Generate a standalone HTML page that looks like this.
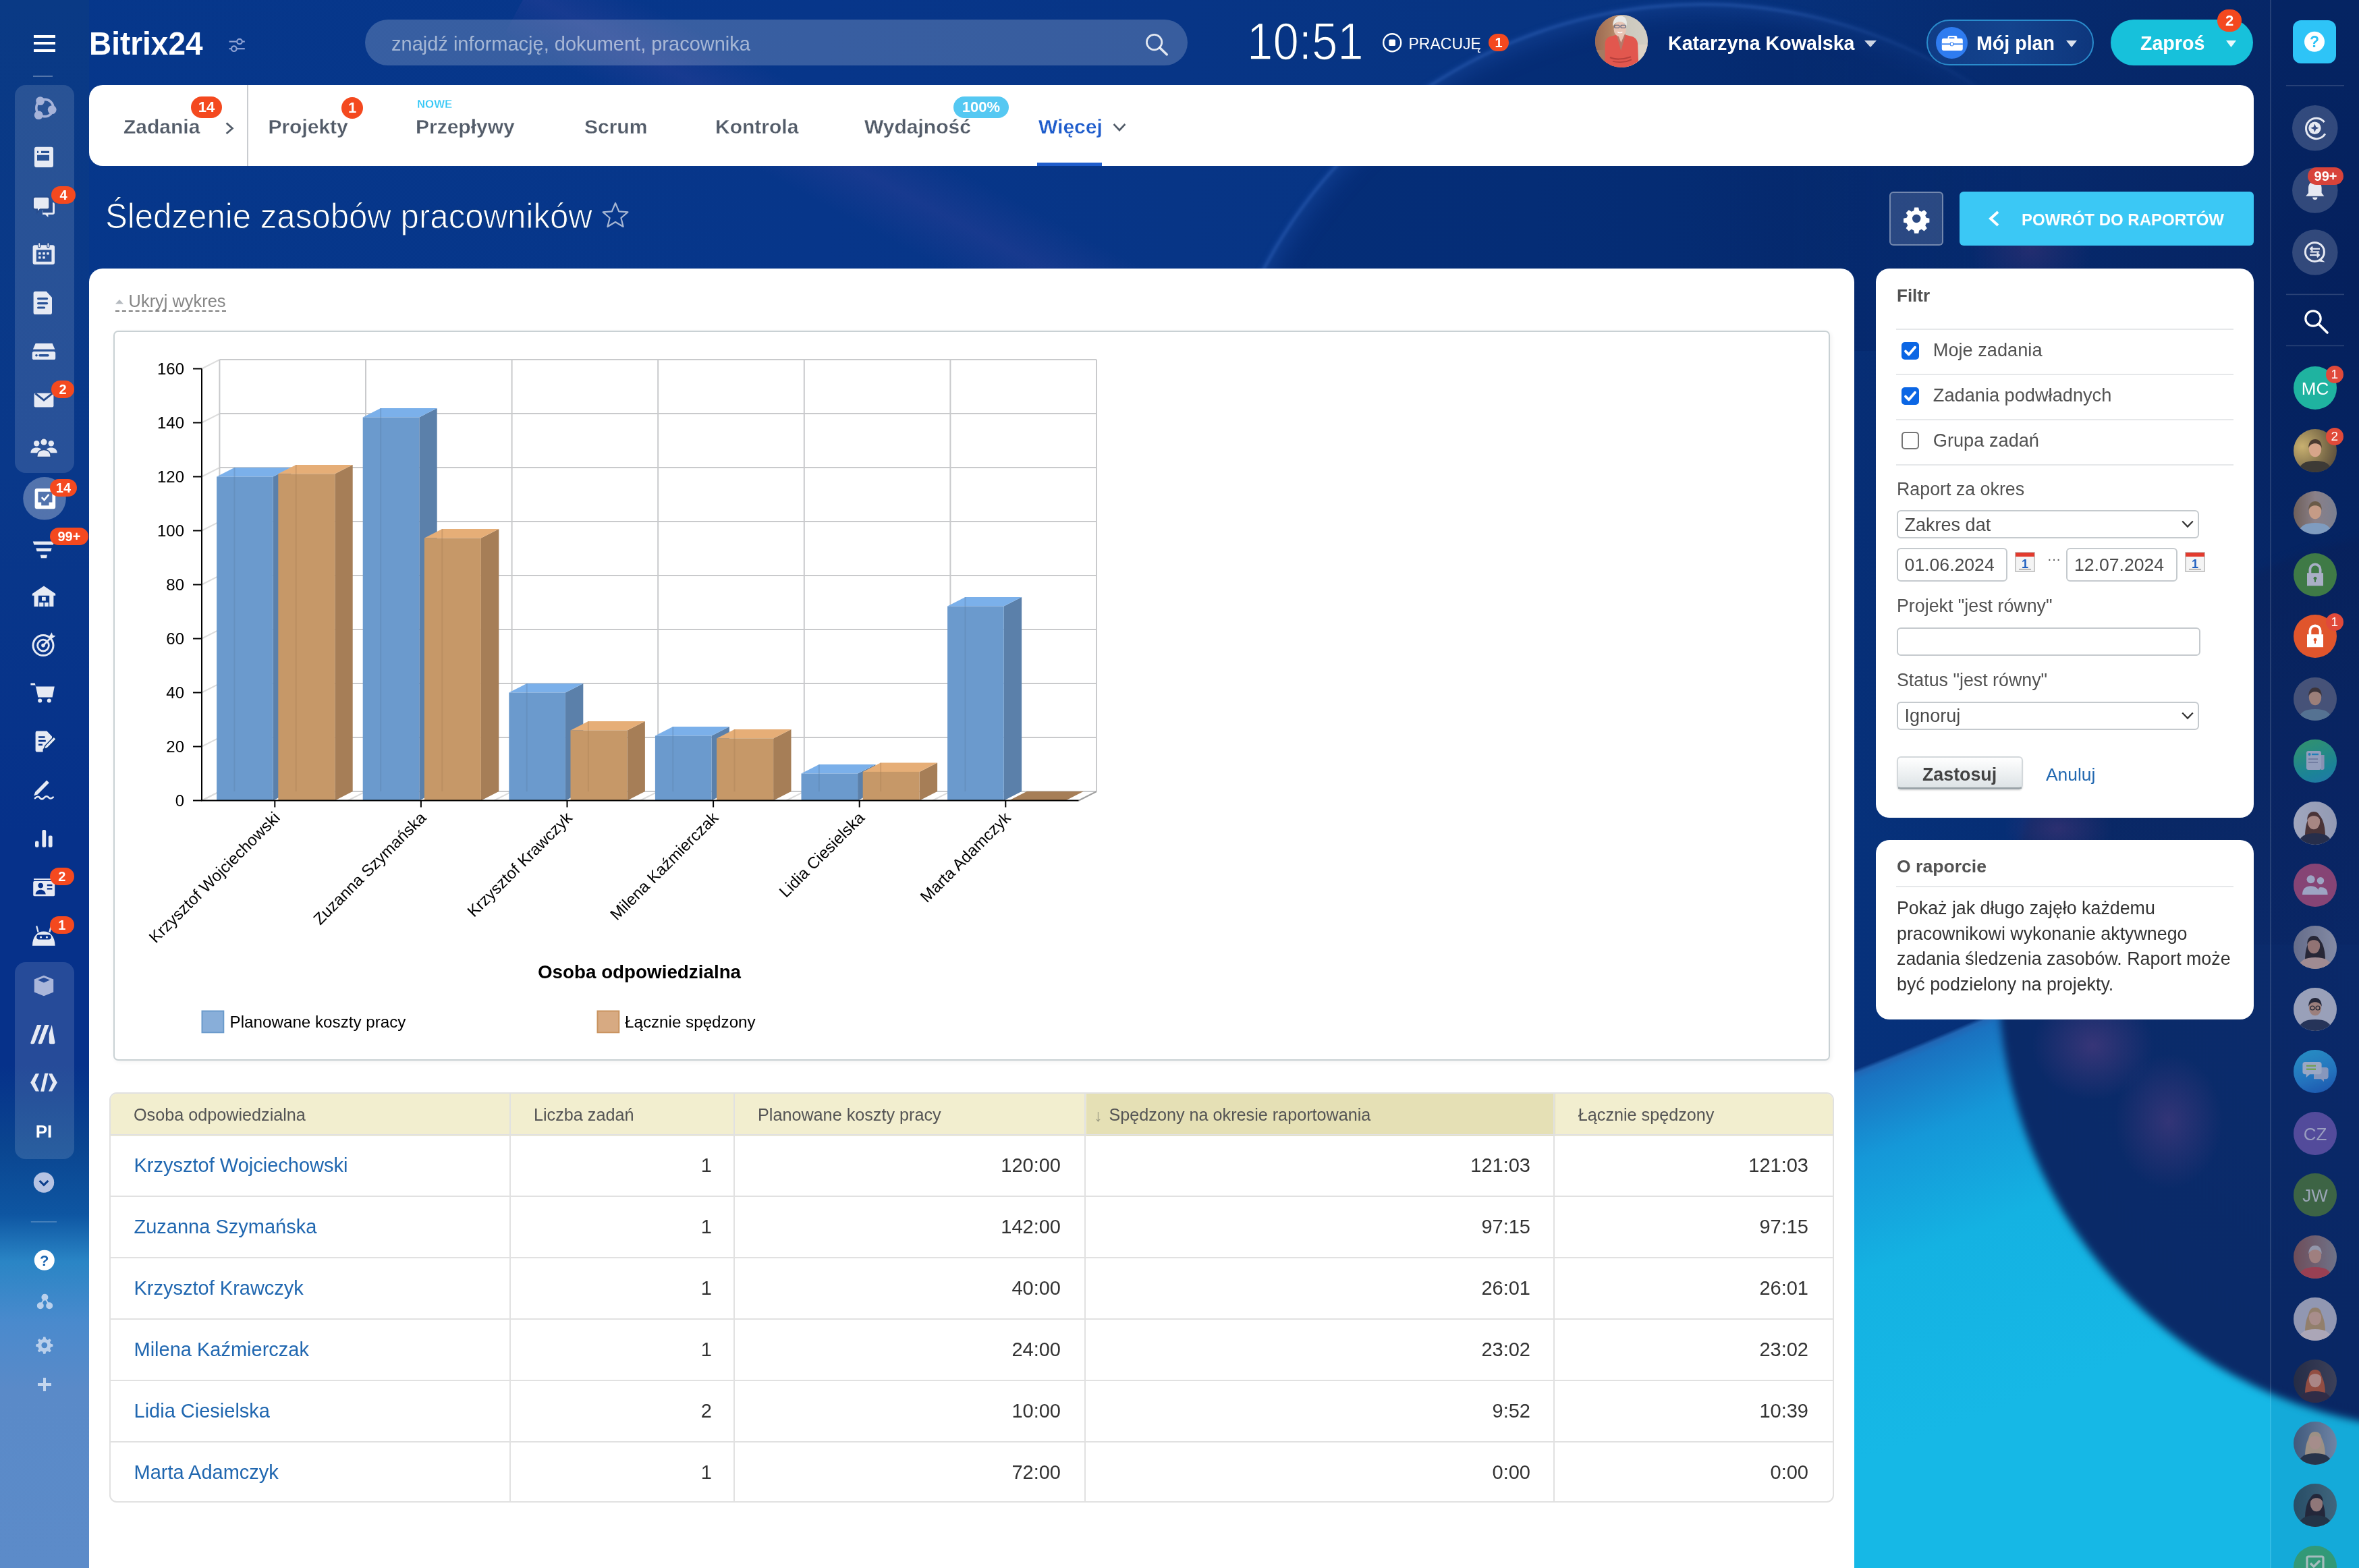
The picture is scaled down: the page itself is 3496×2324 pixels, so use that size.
<!DOCTYPE html>
<html><head><meta charset="utf-8">
<style>
html,body{margin:0;padding:0;width:3496px;height:2324px;overflow:hidden;background:#07357b;}
#w{zoom:2;will-change:transform;position:relative;width:1748px;height:1162px;overflow:hidden;font-family:"Liberation Sans",sans-serif;}
.a{position:absolute;}
.t{position:absolute;white-space:nowrap;line-height:1;}
#bg{left:0;top:0;width:1748px;height:1162px;overflow:hidden;background:#07357b;}
.card{position:absolute;background:#fff;border-radius:10px;}
.badge{position:absolute;background:#f4491f;color:#fff;font-weight:bold;text-align:center;border-radius:8px;}
/* sidebar */
.pill{position:absolute;left:11px;width:44px;background:rgba(255,255,255,.13);border-radius:8px;}
.sbi{position:absolute;left:20.5px;width:24px;height:24px;}
.rc{position:absolute;left:1699.5px;width:32px;height:32px;border-radius:50%;}
/* tabs */
.tab{position:absolute;top:86.7px;font-size:15px;font-weight:bold;color:#535c69;letter-spacing:0px;-webkit-text-stroke:.14px #fff;}
/* filter */
.flab{position:absolute;left:1405.5px;font-size:13px;color:#525252;white-space:nowrap;line-height:1;}
.fsep{position:absolute;left:1405px;width:250px;height:1px;background:#e6e8ea;}
.cb{position:absolute;left:1409px;width:13px;height:13px;border-radius:2.5px;box-sizing:border-box;}
.inp{position:absolute;box-sizing:border-box;border:1px solid #c5cace;border-radius:3px;background:#fff;font-size:13.5px;color:#4a4a4a;}
/* table */
.th{position:absolute;top:809.5px;height:31.5px;font-size:12.6px;color:#545454;}
.row{position:absolute;left:81px;width:1277.5px;height:1px;background:#e1e1e1;}
.vl{position:absolute;width:1px;background:#e1e1e1;}
.nm{position:absolute;left:99.25px;font-size:14.5px;color:#2067b0;white-space:nowrap;line-height:1;}
.num{position:absolute;font-size:14.5px;color:#333;white-space:nowrap;line-height:1;text-align:right;}
</style></head><body><div id="w">
<div id="bg" class="a"></div>
<!--BG_START-->
<div class="a" style="left:0;top:0;width:1748px;height:1162px;background:linear-gradient(90deg,#06378b 0%,#07368a 35%,#073482 65%,#063078 85%,#062e72 100%);"></div>
<div class="a" style="left:0;top:0;width:1748px;height:1162px;background:
 radial-gradient(circle 2700px at 496px -1469px, rgba(7,53,123,0) 2426px, #2166b4 2429px, #1a72c0 2434px, #1598d8 2490px, #14b2e2 2570px, #16b8e6 2700px);"></div>
<!-- dark blob right -->
<div class="a" style="left:1481px;top:392px;width:668px;height:668px;border-radius:50%;background:radial-gradient(circle at 50% 45%, #0b2c6e 0%, #0a2a68 70%, #082462 97%, #0a2a66 100%);filter:blur(3px);"></div>
<!-- purple glows -->
<div class="a" style="left:1460px;top:150px;width:90px;height:70px;border-radius:50%;background:radial-gradient(closest-side,rgba(95,60,130,.45),rgba(95,60,130,0));"></div>
<div class="a" style="left:1485px;top:589px;width:80px;height:50px;border-radius:50%;background:radial-gradient(closest-side,rgba(95,60,130,.45),rgba(95,60,130,0));"></div>
<div class="a" style="left:1506px;top:735px;width:90px;height:80px;border-radius:50%;background:radial-gradient(closest-side,rgba(100,65,135,.5),rgba(100,65,135,0));"></div>
<div class="a" style="left:1567px;top:781px;width:80px;height:100px;border-radius:50%;background:radial-gradient(closest-side,rgba(100,65,135,.45),rgba(100,65,135,0));"></div>
<!-- top ring -->
<div class="a" style="left:880px;top:0;width:620px;height:260px;overflow:hidden;-webkit-mask-image:linear-gradient(90deg,#000 0%,#000 72%,rgba(0,0,0,0) 100%);"><div class="a" style="left:13.5px;top:2.7px;width:736px;height:736px;border-radius:50%;box-sizing:border-box;border:1.5px solid rgba(80,140,240,.45);background:rgba(0,12,55,.16);box-shadow:inset 0 0 22px rgba(50,120,230,.35), 0 0 5px rgba(60,120,230,.25);filter:blur(1px);"></div></div>
<!-- diagonal streak -->
<div class="a" style="left:390px;top:-40px;width:560px;height:70px;transform-origin:0 50%;transform:rotate(28deg);background:linear-gradient(rgba(120,80,180,0),rgba(110,80,175,.16) 50%,rgba(120,80,180,0));"></div>
<!-- darker right top area -->
<div class="a" style="left:1100px;top:0;width:648px;height:700px;background:radial-gradient(ellipse 500px 600px at 100% 30%, rgba(6,24,80,.55), rgba(6,24,80,0));"></div>
<!-- left sidebar overlay -->
<div class="a" style="left:0;top:0;width:66px;height:1162px;background:linear-gradient(#0a3a85 0px,#09388a 350px,#06318a 620px,#06318a 790px,#0a4590 850px,#0e56a2 900px,#2a85c5 935px,#4a8acd 980px,#5a8ac8 1030px,#5c8bc9 1162px);"></div>
<!-- right sidebar overlay -->
<div class="a" style="left:1682.5px;top:0;width:65.5px;height:1162px;background:rgba(5,15,60,.08);"></div>

<!--BG_END-->

<!-- ===== LEFT SIDEBAR ===== -->
<div class="a" style="left:25px;top:26px;width:16px;height:2px;background:#fff;"></div>
<div class="a" style="left:25px;top:31px;width:16px;height:2px;background:#fff;"></div>
<div class="a" style="left:25px;top:36.5px;width:16px;height:2px;background:#fff;"></div>
<div class="a" style="left:24.7px;top:56px;width:14.3px;height:1px;background:rgba(255,255,255,.3);"></div>
<div class="pill" style="top:63px;height:287.5px;"></div>
<div class="pill" style="top:713px;height:146px;"></div>
<!--SB_START-->
<svg class="a" style="left:0;top:0;" width="66" height="1162" viewBox="0 0 66 1162">
<g fill="#e6eaf4">
<!-- 1 ring circles -->
<g fill="#a6b3d9"><circle cx="33.2" cy="80" r="6.3" fill="none" stroke="#a6b3d9" stroke-width="1.8"/><circle cx="29.8" cy="74.8" r="3.2"/><circle cx="38.6" cy="81.3" r="3.2"/><circle cx="28.6" cy="85.3" r="3.2"/></g>
<!-- 2 window -->
<path fill-rule="evenodd" d="M27 108.9h11a1.5 1.5 0 0 1 1.5 1.5v12.1a1.5 1.5 0 0 1-1.5 1.5h-11a1.5 1.5 0 0 1-1.5-1.5v-12.1a1.5 1.5 0 0 1 1.5-1.5z M27.5 114.9h9v4.1h-9z M30.5 111.9h6v1.6h-6z M27.5 111.9h1v1.6h-1z"/>
<!-- 3 chat -->
<path d="M31.5 150h7.5a1.5 1.5 0 0 1 1.5 1.5v6a1.5 1.5 0 0 1-1.5 1.5h-3.3v2l-2.2-2h-2z"/>
<rect x="31.7" y="150" width="7.3" height="7.6" fill="#274c8d"/>
<path d="M26 145.9h9.1a1.5 1.5 0 0 1 1.5 1.5v6.2a1.5 1.5 0 0 1-1.5 1.5h-5.3l-2.3 2.4v-2.4h-1.5a1.5 1.5 0 0 1-1.5-1.5v-6.2a1.5 1.5 0 0 1 1.5-1.5z" stroke="#274c8d" stroke-width="1"/>
<!-- 4 calendar -->
<path fill-rule="evenodd" d="M25.8 181.6h13.2a1.5 1.5 0 0 1 1.5 1.5v11.4a1.5 1.5 0 0 1-1.5 1.5h-13.2a1.5 1.5 0 0 1-1.5-1.5v-11.4a1.5 1.5 0 0 1 1.5-1.5z M26.9 185.1h11.3v8.8h-11.3z"/>
<rect x="28.5" y="187" width="1.8" height="1.8" rx=".4"/><rect x="31.6" y="187" width="1.8" height="1.8" rx=".4"/><rect x="34.6" y="187" width="1.8" height="1.8" rx=".4"/>
<rect x="28.5" y="190" width="1.8" height="1.8" rx=".4"/><rect x="31.6" y="190" width="1.8" height="1.8" rx=".4"/>
<rect x="28.3" y="179.8" width="1.6" height="3.6" rx=".8" stroke="#274c8d" stroke-width=".6"/><rect x="34.9" y="179.8" width="1.6" height="3.6" rx=".8" stroke="#274c8d" stroke-width=".6"/>
<!-- 5 doc -->
<path fill-rule="evenodd" d="M26.2 216h8.2l4.1 4.5v11.1a1.4 1.4 0 0 1-1.4 1.4h-10.9a1.4 1.4 0 0 1-1.4-1.4v-14.2a1.4 1.4 0 0 1 1.4-1.4z M28.3 220.5h6.5a.8.8 0 0 1 0 1.6h-6.5a.8.8 0 0 1 0-1.6z M28.3 224h6.5a.8.8 0 0 1 0 1.6h-6.5a.8.8 0 0 1 0-1.6z M28.3 227.2h4.5a.8.8 0 0 1 0 1.6h-4.5a.8.8 0 0 1 0-1.6z"/>
<!-- 6 drive -->
<path d="M26.3 254.5h12.5l1.9 4.4h-16.3z"/>
<path fill-rule="evenodd" d="M25.2 260.5h14.6a1.3 1.3 0 0 1 1.3 1.3v3.4a1.3 1.3 0 0 1-1.3 1.3h-14.6a1.3 1.3 0 0 1-1.3-1.3v-3.4a1.3 1.3 0 0 1 1.3-1.3z M27 262.5a.9.9 0 1 1 0 1.8a.9.9 0 1 1 0-1.8z M29.5 262.5h6a.9.9 0 0 1 0 1.8h-6a.9.9 0 0 1 0-1.8z"/>
<!-- 7 mail -->
<rect x="25.3" y="291.4" width="14.4" height="10.3" rx="1"/>
<polyline points="26.2,291.6 32.5,296.6 38.8,291.6" fill="none" stroke="#274c8d" stroke-width="1.4"/>
<!-- 8 people -->
<circle cx="27.1" cy="328.6" r="2.1"/><path d="M22.7 335.6c0-2.6 2-3.8 4.4-3.8s4.4 1.2 4.4 3.8z"/>
<circle cx="37.9" cy="328.6" r="2.1"/><path d="M33.5 335.6c0-2.6 2-3.8 4.4-3.8s4.4 1.2 4.4 3.8z"/>
<circle cx="32.5" cy="327.6" r="2.7" stroke="#274c8d" stroke-width=".8"/><path d="M27.3 338.8c0-3.8 2.3-5.6 5.2-5.6s5.2 1.8 5.2 5.6z" stroke="#274c8d" stroke-width=".8"/>
<!-- 9 tasks active -->
<circle cx="33" cy="369.4" r="15.9" fill="rgba(255,255,255,.3)"/>
<path fill-rule="evenodd" fill="#fff" d="M27.3 362h12.3a1.5 1.5 0 0 1 1.5 1.5v12.1a1.5 1.5 0 0 1-1.5 1.5h-12.3a1.5 1.5 0 0 1-1.5-1.5v-12.1a1.5 1.5 0 0 1 1.5-1.5z M28.2 364.4h10.5v7.8h-2.4v2.4h-5.7v-2.4h-2.4z"/>
<polyline points="30.9,368.6 32.8,370.5 36.2,366.4" fill="none" stroke="#fff" stroke-width="1.3"/>
<!-- 10 funnel -->
<path d="M24.4 401.2h15.8l-.8 2.6h-14.2z"/><path d="M26.7 406.3h11.6l-.6 2.3h-10.4z"/><path d="M29.9 411.2h5.1l-.5 2.4h-4.1z"/>
<!-- 11 warehouse -->
<path fill-rule="evenodd" d="M23.9 440l8.6-5.8l8.6 5.8v1.4h-1.4v8.1h-14.4v-8.1h-1.4z M28.4 441.4h8.2v8.1h-8.2z"/>
<rect x="31" y="442.4" width="2.9" height="2.8"/><rect x="29.1" y="446.5" width="3.1" height="3"/><rect x="33" y="446.5" width="2.9" height="3"/>
<!-- 12 target -->
<circle cx="32" cy="478.3" r="7.5" fill="none" stroke="#e6eaf4" stroke-width="1.5"/>
<circle cx="32" cy="478.3" r="4.2" fill="none" stroke="#e6eaf4" stroke-width="1.4"/>
<circle cx="32" cy="478.3" r="1.4"/>
<line x1="32" y1="478.3" x2="38.2" y2="472.1" stroke="#e6eaf4" stroke-width="1.4"/>
<path d="M36.2 472l2.2-3.4l.6 2.1l2.2.5l-3.2 2.4z"/>
<!-- 13 cart -->
<path d="M22.7 506.3h3.2l.5 2.5h14l-1.6 7.9h-10.6l-1.9-8.9h-3.6z"/>
<circle cx="29.6" cy="519.3" r="1.5"/><circle cx="36.4" cy="519.3" r="1.5"/>
<!-- 14 doc edit -->
<path fill-rule="evenodd" d="M27.5 541.8h7.2l3.8 3.9v2.7l-6.7 6.9v2h-4.3a1.2 1.2 0 0 1-1.2-1.2v-13.1a1.2 1.2 0 0 1 1.2-1.2z M28.5 545.6h4.8v1.3h-4.8z M28.5 548.4h5.4v1.3h-5.4z M28.5 551.2h3v1.3h-3z"/>
<path d="M33.5 552.6l6.4-6.6l1.7 1.7l-6.4 6.6l-2.6.8z" stroke="#08357b" stroke-width=".7"/>
<!-- 15 sign -->
<path d="M34.6 578.3l1.8 1.8l-8.5 8.6l-2.8 1l1-2.8z"/>
<path d="M26 591.6c1.5-1.6 2.6-1.6 3.6-.3c1 1.2 2 1.2 3.2-.2c1.2-1.3 2.2-1.3 3.3 0c.9 1 1.8 1 3.3-.3" fill="none" stroke="#e6eaf4" stroke-width="1.3" stroke-linecap="round"/>
<!-- 16 bars -->
<rect x="26" y="623.2" width="2.7" height="4.7" rx="1"/><rect x="31.2" y="615" width="2.9" height="12.9" rx="1"/><rect x="35.9" y="619.2" width="2.9" height="8.7" rx="1"/>
<!-- 17 contact -->
<rect x="25" y="651.1" width="15.5" height="1" />
<path fill-rule="evenodd" d="M25.5 653h14.2a.9.9 0 0 1 .9.9v9.3a.9.9 0 0 1-.9.9h-14.2a.9.9 0 0 1-.9-.9v-9.3a.9.9 0 0 1 .9-.9z M30.1 654.4a1.9 1.9 0 1 1 0 3.8a1.9 1.9 0 1 1 0-3.8z M26.3 662.8c.3-2.3 1.8-3.4 3.8-3.4s3.5 1.1 3.8 3.4z M34.9 655.4h3.8v1.2h-3.8z M34.9 658.1h3.8v1.2h-3.8z"/>
<!-- 18 robot -->
<path fill-rule="evenodd" d="M24 700.9c0-7 3.7-10.7 8.4-10.7s8.4 3.7 8.4 10.7z M28.8 692.8h7.4a1.7 1.7 0 0 1 0 3.4h-7.4a1.7 1.7 0 0 1 0-3.4z"/>
<circle cx="30.3" cy="694.5" r=".8"/><circle cx="34.7" cy="694.5" r=".8"/>
<line x1="27.1" y1="686.2" x2="28.3" y2="690.8" stroke="#e6eaf4" stroke-width="1.1"/><line x1="37.9" y1="686.2" x2="36.7" y2="690.8" stroke="#e6eaf4" stroke-width="1.1"/>
<!-- pill2: cube -->
<path fill-rule="evenodd" fill="#aab6da" d="M32.5 722.9l7.1 2.8v9.6l-7.1 2.8l-7.1-2.8v-9.6z M32.5 724.5l-4.5 1.8l4.5 1.9l4.5-1.9z"/>
<!-- M slashes -->
<path d="M27.5 759.5h3.2l-5 13.2a1.3 1.3 0 0 1-1.2.9h-1.2a.7.7 0 0 1-.6-1z"/>
<path d="M33.2 759.5h3.2l-5 13.2a1.3 1.3 0 0 1-1.2.9h-1.2a.7.7 0 0 1-.6-1z"/>
<path d="M38.4 759.5l2.3 12.8a1 1 0 0 1-1 1.3h-2.3a1 1 0 0 1-1-1v-6.7z"/>
<!-- </> -->
<path d="M26.4 795.6h2.6l-3.1 6.6l3.1 6.6h-2.6l-3.8-6.6z"/><path d="M38.6 795.6h-2.6l3.1 6.6l-3.1 6.6h2.6l3.8-6.6z"/>
<path d="M33.2 795.4h2.5l-3.1 13.5h-2.5z"/>
</g>
<text x="32.5" y="843.2" text-anchor="middle" font-size="13" font-weight="bold" fill="#fff" font-family="Liberation Sans">PI</text>
<circle cx="32.5" cy="876.3" r="7.6" fill="#b6c3e3"/>
<polyline points="29.3,875 32.5,878.2 35.7,875" fill="none" stroke="#0b3c8a" stroke-width="1.5"/>
<rect x="22.9" y="905" width="19.1" height="0.9" fill="rgba(255,255,255,.22)"/>
<circle cx="32.9" cy="933.9" r="7.5" fill="#fff"/>
<text x="32.9" y="938" text-anchor="middle" font-size="11" font-weight="bold" fill="#1a64b0" font-family="Liberation Sans">?</text>
<g fill="#b9d0ec" stroke="#b9d0ec">
<circle cx="33.2" cy="961.4" r="2"/><circle cx="29.9" cy="967.6" r="2"/><circle cx="36.6" cy="967.6" r="2"/>
<polyline points="29.9,967.6 33.2,961.4 36.6,967.6" fill="none" stroke-width="1"/>
</g>
<path fill="#b9cfeb" fill-rule="evenodd" d="M32.1 990.8h1.6l.4 1.6l1.3.6l1.4-.9l1.1 1.1l-.9 1.4l.6 1.3l1.6.4v1.6l-1.6.4l-.6 1.3l.9 1.4l-1.1 1.1l-1.4-.9l-1.3.6l-.4 1.6h-1.6l-.4-1.6l-1.3-.6l-1.4.9l-1.1-1.1l.9-1.4l-.6-1.3l-1.6-.4v-1.6l1.6-.4l.6-1.3l-.9-1.4l1.1-1.1l1.4.9l1.3-.6z M32.9 994.7a2.2 2.2 0 1 0 0 4.4a2.2 2.2 0 1 0 0-4.4z"/>
<path fill="#c4d6ee" d="M32 1021h2v4h4v2h-4v4h-2v-4h-4v-2h4z"/>
</svg>
<div class="badge" style="left:38px;top:138px;width:18px;height:13px;font-size:10px;line-height:13px;border-radius:6.5px;">4</div>
<div class="badge" style="left:38px;top:282px;width:17px;height:13px;font-size:10px;line-height:13px;border-radius:6.5px;">2</div>
<div class="badge" style="left:37.1px;top:355px;width:19.8px;height:12.9px;font-size:10px;line-height:13px;border-radius:6.5px;">14</div>
<div class="badge" style="left:37.1px;top:391.2px;width:28.2px;height:12.7px;font-size:10px;line-height:13px;border-radius:6.5px;">99+</div>
<div class="badge" style="left:36.8px;top:643px;width:18.1px;height:13px;font-size:10px;line-height:13px;border-radius:6.5px;">2</div>
<div class="badge" style="left:36.8px;top:679px;width:18.1px;height:12.8px;font-size:10px;line-height:13px;border-radius:6.5px;">1</div>

<!--SB_END-->

<!-- ===== HEADER ===== -->
<div class="t" style="left:66px;top:20px;font-size:24.3px;font-weight:bold;color:#fff;transform:scaleX(.945);transform-origin:0 0;">Bitrix24</div>
<div class="a" style="left:270.5px;top:14.5px;width:609.5px;height:34px;border-radius:17px;background:rgba(255,255,255,.2);"></div>
<div class="t" style="left:290px;top:25.3px;font-size:14.5px;color:rgba(255,255,255,.55);">znajdź informację, dokument, pracownika</div>
<div class="t" style="left:924px;top:11px;font-size:39px;color:#fff;transform:scaleX(.885);transform-origin:0 0;-webkit-text-stroke:.75px #07357b;">10:51</div>
<div class="t" style="left:1043.75px;top:27px;font-size:11.5px;color:#fff;">PRACUJĘ</div>
<div class="badge" style="left:1103px;top:25px;width:15px;height:13px;font-size:10px;line-height:13px;border-radius:7px;">1</div>
<div class="a" style="left:1182px;top:11px;width:39px;height:39px;border-radius:50%;background:#b88a7a;overflow:hidden;"></div>
<div class="t" style="left:1236px;top:24.9px;font-size:14.3px;font-weight:bold;color:#fff;">Katarzyna Kowalska</div>
<div class="a" style="left:1427.5px;top:14.5px;width:124px;height:34px;box-sizing:border-box;border:1px solid #2a8ccc;border-radius:17px;background:linear-gradient(90deg,rgba(60,130,220,.18),rgba(60,140,230,.25) 50%,rgba(60,130,220,.15));"></div>
<div class="a" style="left:1434.5px;top:19.75px;width:23.5px;height:23.5px;border-radius:50%;background:#2f7cf0;"></div>
<div class="t" style="left:1464.5px;top:24.9px;font-size:14.3px;font-weight:bold;color:#fff;">Mój plan</div>
<div class="a" style="left:1564px;top:14.5px;width:105.5px;height:34px;border-radius:17px;background:#17c1db;"></div>
<div class="t" style="left:1586px;top:24.9px;font-size:14.3px;font-weight:bold;color:#fff;">Zaproś</div>
<div class="badge" style="left:1643px;top:7px;width:18px;height:16.5px;font-size:11px;line-height:16.5px;">2</div>

<!-- ===== RIGHT SIDEBAR ===== -->
<div class="a" style="left:1682px;top:0;width:1px;height:1162px;background:rgba(255,255,255,.12);"></div>
<div class="a" style="left:1698.75px;top:15px;width:32.25px;height:32px;border-radius:6px;background:#2ec4f7;"></div>

<!-- ===== TABS ===== -->
<!--AV_START-->
<div class="a" style="left:1699.5px;top:271.70px;width:32px;height:32px;border-radius:50%;overflow:hidden;background:#1fb3a0;"><div class="t" style="left:0;width:32px;text-align:center;top:10px;font-size:13px;color:#fff;">MC</div></div>
<div class="a" style="left:1699.5px;top:317.90px;width:32px;height:32px;border-radius:50%;overflow:hidden;background:radial-gradient(circle at 20% 40%,#c8b070,#7a6a48 60%,#4a4038);"><svg width="32" height="32" viewBox="0 0 32 32"><path d="M3 33c1-7 5-9.5 13-9.5s12 2.5 13 9.5z" fill="#3d3a36"/><ellipse cx="16" cy="15" rx="4.6" ry="5.6" fill="#d7a58a"/><path d="M11.1 14c0-4.5 2-6.5 4.9-6.5s4.9 2 4.9 6.5c-.8-2.3-2.5-3.4-4.9-3.4s-4.1 1.1-4.9 3.4z" fill="#4a3a30"/></svg></div>
<div class="a" style="left:1699.5px;top:363.80px;width:32px;height:32px;border-radius:50%;overflow:hidden;background:linear-gradient(90deg,#6e5f5a,#8a8088 50%,#7a7f90);"><svg width="32" height="32" viewBox="0 0 32 32"><path d="M3 33c1-7 5-9.5 13-9.5s12 2.5 13 9.5z" fill="#7f9cc0"/><ellipse cx="16" cy="15" rx="4.6" ry="5.6" fill="#c59b86"/><path d="M11.1 14c0-4.5 2-6.5 4.9-6.5s4.9 2 4.9 6.5c-.8-2.3-2.5-3.4-4.9-3.4s-4.1 1.1-4.9 3.4z" fill="#6a5a48"/></svg></div>
<div class="a" style="left:1699.5px;top:409.80px;width:32px;height:32px;border-radius:50%;overflow:hidden;background:#3f7a46;"><svg width="32" height="32" viewBox="0 0 32 32"><path d="M12.2 15v-3a3.8 3.8 0 0 1 7.6 0v3" fill="none" stroke="#a9afc6" stroke-width="1.9"/><rect x="10" y="14.6" width="12" height="9.5" fill="#a9afc6"/><circle cx="16" cy="18.6" r="1.2" fill="#3f7a46"/><rect x="15.5" y="19" width="1" height="2.4" fill="#3f7a46"/></svg></div>
<div class="a" style="left:1699.5px;top:455.50px;width:32px;height:32px;border-radius:50%;overflow:hidden;background:#e0552c;"><svg width="32" height="32" viewBox="0 0 32 32"><path d="M12.2 15v-3a3.8 3.8 0 0 1 7.6 0v3" fill="none" stroke="#ffffff" stroke-width="1.9"/><rect x="10" y="14.6" width="12" height="9.5" fill="#ffffff"/><circle cx="16" cy="18.6" r="1.2" fill="#e0552c"/><rect x="15.5" y="19" width="1" height="2.4" fill="#e0552c"/></svg></div>
<div class="a" style="left:1699.5px;top:501.80px;width:32px;height:32px;border-radius:50%;overflow:hidden;background:#57617f;"><svg width="32" height="32" viewBox="0 0 32 32"><path d="M3 33c1-7 5-9.5 13-9.5s12 2.5 13 9.5z" fill="#6a8aa0"/><ellipse cx="16" cy="15" rx="4.6" ry="5.6" fill="#c49a80"/><path d="M11.1 14c0-4.5 2-6.5 4.9-6.5s4.9 2 4.9 6.5c-.8-2.3-2.5-3.4-4.9-3.4s-4.1 1.1-4.9 3.4z" fill="#4a3a30"/></svg><div class="a" style="left:0;top:0;width:32px;height:32px;background:rgba(12,30,95,.22);"></div></div>
<div class="a" style="left:1699.5px;top:548.00px;width:32px;height:32px;border-radius:50%;overflow:hidden;background:linear-gradient(160deg,#3fb46e,#1f9fa8 70%,#2a8fc0);"><svg width="32" height="32" viewBox="0 0 32 32"><rect x="9.5" y="8.5" width="11" height="14" rx="1.5" fill="#b9c2d8"/><path d="M20.5 11.5h2.3v9.5a1.5 1.5 0 0 1-1.5 1.5h-.8z" fill="#a9b3cc"/><circle cx="11.8" cy="11" r="1" fill="#2a9ad0"/><rect x="13.5" y="10.4" width="5" height="1.2" fill="#2a9ad0"/><rect x="11" y="14" width="7" height="1" fill="#8f99b5"/><rect x="11" y="16.5" width="7" height="1" fill="#8f99b5"/></svg><div class="a" style="left:0;top:0;width:32px;height:32px;background:rgba(12,30,95,.22);"></div></div>
<div class="a" style="left:1699.5px;top:594.00px;width:32px;height:32px;border-radius:50%;overflow:hidden;background:linear-gradient(90deg,#c9ccd8,#b8bccb);"><svg width="32" height="32" viewBox="0 0 32 32"><path d="M8.5 26c0-9 2.5-17 7.5-17s7.5 8 7.5 17z" fill="#5c3a2e"/><path d="M3 33c1-7 5-9.5 13-9.5s12 2.5 13 9.5z" fill="#2e3346"/><ellipse cx="15" cy="15" rx="4.6" ry="5.6" fill="#d2a38e"/><path d="M10.1 14c0-4.5 2-6.5 4.9-6.5s4.9 2 4.9 6.5c-.8-2.3-2.5-3.4-4.9-3.4s-4.1 1.1-4.9 3.4z" fill="#5c3a2e"/></svg><div class="a" style="left:0;top:0;width:32px;height:32px;background:rgba(12,30,95,.22);"></div></div>
<div class="a" style="left:1699.5px;top:640.00px;width:32px;height:32px;border-radius:50%;overflow:hidden;background:#a84f7c;"><svg width="32" height="32" viewBox="0 0 32 32"><g fill="#c6cadf"><circle cx="12.8" cy="11.6" r="3"/><path d="M6.5 23c0-4.5 2.6-6.4 6.3-6.4s6.3 1.9 6.3 6.4z"/><circle cx="20" cy="12.6" r="2.6"/><path d="M17.5 23c.4-3.5 1-5.4 2.5-5.5c3.3 0 5.3 1.6 5.3 5.5z"/></g></svg><div class="a" style="left:0;top:0;width:32px;height:32px;background:rgba(12,30,95,.22);"></div></div>
<div class="a" style="left:1699.5px;top:686.00px;width:32px;height:32px;border-radius:50%;overflow:hidden;background:linear-gradient(90deg,#7e8296,#a5a9b8);"><svg width="32" height="32" viewBox="0 0 32 32"><path d="M8.5 26c0-9 2.5-17 7.5-17s7.5 8 7.5 17z" fill="#2f2a2c"/><path d="M3 33c1-7 5-9.5 13-9.5s12 2.5 13 9.5z" fill="#c9a9a0"/><ellipse cx="15" cy="15" rx="4.6" ry="5.6" fill="#b78b7a"/><path d="M10.1 14c0-4.5 2-6.5 4.9-6.5s4.9 2 4.9 6.5c-.8-2.3-2.5-3.4-4.9-3.4s-4.1 1.1-4.9 3.4z" fill="#2f2a2c"/></svg><div class="a" style="left:0;top:0;width:32px;height:32px;background:rgba(12,30,95,.22);"></div></div>
<div class="a" style="left:1699.5px;top:732.00px;width:32px;height:32px;border-radius:50%;overflow:hidden;background:#c1c5d3;"><svg width="32" height="32" viewBox="0 0 32 32"><path d="M3 33c1-7 5-9.5 13-9.5s12 2.5 13 9.5z" fill="#2d3a58"/><ellipse cx="16" cy="15" rx="4.6" ry="5.6" fill="#c39a85"/><path d="M11.1 14c0-4.5 2-6.5 4.9-6.5s4.9 2 4.9 6.5c-.8-2.3-2.5-3.4-4.9-3.4s-4.1 1.1-4.9 3.4z" fill="#2a2a30"/><g fill="none" stroke="#222" stroke-width=".6"><circle cx="14" cy="15" r="1.5"/><circle cx="18" cy="15" r="1.5"/></g></svg><div class="a" style="left:0;top:0;width:32px;height:32px;background:rgba(12,30,95,.22);"></div></div>
<div class="a" style="left:1699.5px;top:778.00px;width:32px;height:32px;border-radius:50%;overflow:hidden;background:linear-gradient(160deg,#2fb0e0,#2a8ad8 60%,#1f60c0);"><svg width="32" height="32" viewBox="0 0 32 32"><path d="M15 13h9a1.8 1.8 0 0 1 1.8 1.8v5a1.8 1.8 0 0 1-1.8 1.8h-1.5v2l-2.2-2h-5.3z" fill="#a9b9d6"/><path d="M8.5 9h10.5a1.8 1.8 0 0 1 1.8 1.8v5.5a1.8 1.8 0 0 1-1.8 1.8h-7l-2.6 2.4v-2.4h-.9a1.8 1.8 0 0 1-1.8-1.8v-5.5a1.8 1.8 0 0 1 1.8-1.8z" fill="#c2cde0"/><rect x="9.5" y="11.3" width="7" height="1.1" fill="#8bc34a"/><rect x="9.5" y="13.8" width="7" height="1.1" fill="#8bc34a"/></svg><div class="a" style="left:0;top:0;width:32px;height:32px;background:rgba(12,30,95,.22);"></div></div>
<div class="a" style="left:1699.5px;top:824.00px;width:32px;height:32px;border-radius:50%;overflow:hidden;background:#6758ac;"><div class="t" style="left:0;width:32px;text-align:center;top:10px;font-size:13px;color:#c2c2dc;">CZ</div><div class="a" style="left:0;top:0;width:32px;height:32px;background:rgba(12,30,95,.22);"></div></div>
<div class="a" style="left:1699.5px;top:869.50px;width:32px;height:32px;border-radius:50%;overflow:hidden;background:#4b783e;"><div class="t" style="left:0;width:32px;text-align:center;top:10px;font-size:13px;color:#c4ccd0;">JW</div><div class="a" style="left:0;top:0;width:32px;height:32px;background:rgba(12,30,95,.22);"></div></div>
<div class="a" style="left:1699.5px;top:915.50px;width:32px;height:32px;border-radius:50%;overflow:hidden;background:linear-gradient(90deg,#8a5a58,#8b8a94);"><svg width="32" height="32" viewBox="0 0 32 32"><path d="M3 33c1-7 5-9.5 13-9.5s12 2.5 13 9.5z" fill="#c04a50"/><ellipse cx="16" cy="15" rx="4.6" ry="5.6" fill="#c89a88"/><path d="M11.1 14c0-4.5 2-6.5 4.9-6.5s4.9 2 4.9 6.5c-.8-2.3-2.5-3.4-4.9-3.4s-4.1 1.1-4.9 3.4z" fill="#b8b8c0"/></svg><div class="a" style="left:0;top:0;width:32px;height:32px;background:rgba(12,30,95,.22);"></div></div>
<div class="a" style="left:1699.5px;top:961.50px;width:32px;height:32px;border-radius:50%;overflow:hidden;background:#b7b9ca;"><svg width="32" height="32" viewBox="0 0 32 32"><path d="M8.5 26c0-9 2.5-17 7.5-17s7.5 8 7.5 17z" fill="#b89a70"/><path d="M3 33c1-7 5-9.5 13-9.5s12 2.5 13 9.5z" fill="#d8ccd0"/><ellipse cx="16" cy="15" rx="4.6" ry="5.6" fill="#d4ac98"/><path d="M11.1 14c0-4.5 2-6.5 4.9-6.5s4.9 2 4.9 6.5c-.8-2.3-2.5-3.4-4.9-3.4s-4.1 1.1-4.9 3.4z" fill="#b89a70"/></svg><div class="a" style="left:0;top:0;width:32px;height:32px;background:rgba(12,30,95,.22);"></div></div>
<div class="a" style="left:1699.5px;top:1007.50px;width:32px;height:32px;border-radius:50%;overflow:hidden;background:linear-gradient(90deg,#2c3040,#4a4a58);"><svg width="32" height="32" viewBox="0 0 32 32"><path d="M8.5 26c0-9 2.5-17 7.5-17s7.5 8 7.5 17z" fill="#b85a3a"/><path d="M3 33c1-7 5-9.5 13-9.5s12 2.5 13 9.5z" fill="#3a3040"/><ellipse cx="16" cy="15" rx="4.6" ry="5.6" fill="#d6a290"/><path d="M11.1 14c0-4.5 2-6.5 4.9-6.5s4.9 2 4.9 6.5c-.8-2.3-2.5-3.4-4.9-3.4s-4.1 1.1-4.9 3.4z" fill="#b85a3a"/></svg><div class="a" style="left:0;top:0;width:32px;height:32px;background:rgba(12,30,95,.22);"></div></div>
<div class="a" style="left:1699.5px;top:1053.50px;width:32px;height:32px;border-radius:50%;overflow:hidden;background:linear-gradient(90deg,#4f6a84,#8aa0b8);"><svg width="32" height="32" viewBox="0 0 32 32"><path d="M8.5 26c0-9 2.5-17 7.5-17s7.5 8 7.5 17z" fill="#c4b090"/><path d="M3 33c1-7 5-9.5 13-9.5s12 2.5 13 9.5z" fill="#2f3a44"/><ellipse cx="16" cy="15" rx="4.6" ry="5.6" fill="#d0ac98"/><path d="M11.1 14c0-4.5 2-6.5 4.9-6.5s4.9 2 4.9 6.5c-.8-2.3-2.5-3.4-4.9-3.4s-4.1 1.1-4.9 3.4z" fill="#c4b090"/></svg><div class="a" style="left:0;top:0;width:32px;height:32px;background:rgba(12,30,95,.22);"></div></div>
<div class="a" style="left:1699.5px;top:1099.50px;width:32px;height:32px;border-radius:50%;overflow:hidden;background:linear-gradient(90deg,#2f5a68,#4f7a86);"><svg width="32" height="32" viewBox="0 0 32 32"><path d="M8.5 26c0-9 2.5-17 7.5-17s7.5 8 7.5 17z" fill="#2a2a30"/><path d="M3 33c1-7 5-9.5 13-9.5s12 2.5 13 9.5z" fill="#2a3a40"/><ellipse cx="17" cy="15" rx="4.6" ry="5.6" fill="#b49080"/><path d="M12.1 14c0-4.5 2-6.5 4.9-6.5s4.9 2 4.9 6.5c-.8-2.3-2.5-3.4-4.9-3.4s-4.1 1.1-4.9 3.4z" fill="#2a2a30"/></svg><div class="a" style="left:0;top:0;width:32px;height:32px;background:rgba(12,30,95,.22);"></div></div>
<div class="a" style="left:1699.5px;top:1145.50px;width:32px;height:32px;border-radius:50%;overflow:hidden;background:#3dbb7e;"><svg width="32" height="32" viewBox="0 0 32 32"><rect x="10" y="8" width="12" height="11" rx="1" fill="none" stroke="#d0e8d8" stroke-width="1.6"/><polyline points="12.5,13 15,15.5 19.5,11" fill="none" stroke="#d0e8d8" stroke-width="1.6"/></svg><div class="a" style="left:0;top:0;width:32px;height:32px;background:rgba(12,30,95,.22);"></div></div>
<div class="badge" style="left:1723.4px;top:271.00px;width:13px;height:13px;font-size:9.5px;line-height:13px;border-radius:50%;font-weight:normal;background:#e04a3a;">1</div>
<div class="badge" style="left:1723.4px;top:316.90px;width:13px;height:13px;font-size:9.5px;line-height:13px;border-radius:50%;font-weight:normal;background:#e04a3a;">2</div>
<div class="badge" style="left:1723.4px;top:454.50px;width:13px;height:13px;font-size:9.5px;line-height:13px;border-radius:50%;font-weight:normal;background:#e04a3a;">1</div>
<!--AV_END-->
<!--RSB_START-->
<svg class="a" style="left:1682px;top:0;" width="66" height="1162" viewBox="1682 0 66 1162">
<g fill="rgba(255,255,255,.15)"><rect x="1694" y="63" width="43" height=".8"/><rect x="1694" y="217.8" width="43" height=".8"/><rect x="1694" y="255.8" width="43" height=".8"/></g>
<circle cx="1715.4" cy="94.9" r="16.9" fill="rgba(255,255,255,.18)"/>
<circle cx="1715.4" cy="141" r="16.9" fill="rgba(255,255,255,.18)"/>
<circle cx="1715.4" cy="187" r="16.9" fill="rgba(255,255,255,.18)"/>
<!-- copilot -->
<path d="M1722.3 90.5a7.6 7.6 0 1 0 0.6 8.6" fill="none" stroke="#e6e9f2" stroke-width="1.5"/>
<circle cx="1715.2" cy="94.9" r="4.6" fill="#e6e9f2"/>
<path d="M1715.2 91.8l.9 2.2l2.2.9l-2.2.9l-.9 2.2l-.9-2.2l-2.2-.9l2.2-.9z" fill="#3a4f86"/>
<!-- bell -->
<path d="M1715.4 134.2c-3.2 0-4.9 2.3-4.9 5.2v3.6l-1.9 2.4h13.6l-1.9-2.4v-3.6c0-2.9-1.7-5.2-4.9-5.2z" fill="#e6e9f2"/>
<path d="M1713.6 146.3h3.6a1.8 1.8 0 0 1-3.6 0z" fill="#e6e9f2"/>
<!-- chat arrows -->
<circle cx="1715.2" cy="186.7" r="7" fill="none" stroke="#e6e9f2" stroke-width="1.5"/>
<path d="M1719.5 191.6l3.3 2.6l-4.6-.4z" fill="#e6e9f2"/>
<g stroke="#e6e9f2" stroke-width="1.1" fill="none"><line x1="1712" y1="184.4" x2="1719" y2="184.4"/><polyline points="1713.6,182.8 1712,184.4 1713.6,186"/><line x1="1711.5" y1="189" x2="1718.5" y2="189"/><polyline points="1716.9,187.4 1718.5,189 1716.9,190.6"/><line x1="1712" y1="186.7" x2="1718.6" y2="186.7"/></g>
<!-- search -->
<circle cx="1714" cy="236" r="5.6" fill="none" stroke="#fff" stroke-width="1.6"/>
<line x1="1718.1" y1="240.1" x2="1724.5" y2="246.5" stroke="#fff" stroke-width="1.8" stroke-linecap="round"/>
</svg>
<div class="badge" style="left:1710px;top:123.8px;width:26.5px;height:13px;font-size:10px;line-height:13px;border-radius:6.5px;background:#d8433a;">99+</div>

<!--RSB_END-->
<div class="card" style="left:66px;top:63px;width:1604px;height:60px;"></div>
<div class="t tab" style="left:91.5px;">Zadania</div>
<div class="badge" style="left:141.5px;top:71.5px;width:23px;height:16px;font-size:11px;line-height:16px;">14</div>
<div class="a" style="left:183px;top:63px;width:1px;height:60px;background:#c9ccd0;"></div>
<div class="t tab" style="left:198.7px;">Projekty</div>
<div class="badge" style="left:253px;top:71.75px;width:16px;height:16px;font-size:11px;line-height:16px;">1</div>
<div class="t" style="left:309px;top:73.6px;font-size:8.4px;font-weight:bold;color:#2fc6f6;letter-spacing:0px;-webkit-text-stroke:.15px #fff;">NOWE</div>
<div class="t tab" style="left:308px;">Przepływy</div>
<div class="t tab" style="left:433px;">Scrum</div>
<div class="t tab" style="left:530px;">Kontrola</div>
<div class="t tab" style="left:640.5px;">Wydajność</div>
<div class="badge" style="left:706.5px;top:71.5px;width:41px;height:16px;font-size:11px;line-height:16px;background:#55c8f2;">100%</div>
<div class="t tab" style="left:769.5px;color:#1f5dcc;">Więcej</div>
<div class="a" style="left:768.5px;top:120.5px;width:48px;height:2.5px;background:#1f5dcc;"></div>

<!-- ===== TITLE ===== -->
<div class="t" style="left:77.8px;top:147.1px;font-size:26px;color:#fff;-webkit-text-stroke:.5px #07357b;transform:scaleX(.946);transform-origin:0 0;">Śledzenie zasobów pracowników</div>
<div class="a" style="left:1400px;top:142px;width:40px;height:40px;box-sizing:border-box;border:1px solid rgba(255,255,255,.35);border-radius:3px;background:rgba(255,255,255,.15);"></div>
<div class="a" style="left:1452px;top:142px;width:218px;height:40px;border-radius:3px;background:#3bc8f5;"></div>
<div class="t" style="left:1498px;top:157px;font-size:12px;font-weight:bold;color:#fff;">POWRÓT DO RAPORTÓW</div>

<!--HICONS_START-->
<svg class="a" style="left:0;top:0;" width="1748" height="260" viewBox="0 0 1748 260">
<!-- filter sliders -->
<g stroke="#8ea1d3" stroke-width="1.1" fill="none">
<line x1="169.8" y1="30.8" x2="175.4" y2="30.8"/><line x1="179.6" y1="30.8" x2="181.4" y2="30.8"/><circle cx="177.5" cy="30.8" r="1.9"/>
<line x1="169.8" y1="36.1" x2="171.3" y2="36.1"/><line x1="175.5" y1="36.1" x2="181.4" y2="36.1"/><circle cx="173.4" cy="36.1" r="1.9"/>
</g>
<!-- search icon -->
<circle cx="855.3" cy="31.3" r="5.6" fill="none" stroke="rgba(255,255,255,.85)" stroke-width="1.4"/>
<line x1="859.4" y1="35.4" x2="864.6" y2="40.4" stroke="rgba(255,255,255,.85)" stroke-width="1.8" stroke-linecap="round"/>
<!-- stop icon -->
<circle cx="1031.6" cy="31.6" r="6.5" fill="none" stroke="#fff" stroke-width="1.2"/>
<rect x="1029.2" y="29.2" width="4.8" height="4.8" rx=".8" fill="#fff"/>
<!-- user dropdown triangle -->
<path d="M1381.5 30h9l-4.5 5z" fill="rgba(255,255,255,.8)"/>
<!-- briefcase -->
<path fill="#fff" fill-rule="evenodd" d="M1443.3 26.5h5.9a1 1 0 0 1 1 1v1h3a1.2 1.2 0 0 1 1.2 1.2v6.6a1.2 1.2 0 0 1-1.2 1.2h-13.1a1.2 1.2 0 0 1-1.2-1.2v-6.6a1.2 1.2 0 0 1 1.2-1.2h3.2v-1a1 1 0 0 1 1-1z M1444.3 27.6v.9h3.9v-.9z"/>
<rect x="1439" y="32.2" width="15.4" height=".9" fill="#2f7cf0"/>
<rect x="1445.2" y="31.4" width="2.1" height="2.5" rx=".4" fill="#fff" stroke="#2f7cf0" stroke-width=".5"/>
<path d="M1531 30h8l-4 5z" fill="rgba(255,255,255,.85)"/>
<path d="M1649.5 30h7.5l-3.75 5z" fill="rgba(255,255,255,.9)"/>
<!-- help -->
<circle cx="1715" cy="30.9" r="7.5" fill="#fff"/>
<text x="1715" y="35.2" text-anchor="middle" font-size="11.5" font-weight="bold" fill="#2ec4f7" font-family="Liberation Sans">?</text>
<!-- tab chevrons -->
<polyline points="167.8,91.2 172.2,95.1 167.8,99" fill="none" stroke="#525c69" stroke-width="1.4"/>
<polyline points="825.3,92 829.5,96.5 833.7,92" fill="none" stroke="#525c69" stroke-width="1.3"/>
<!-- star -->
<path d="M456 150.5l2.6 6.2l6.6.5l-5 4.3l1.6 6.5l-5.8-3.5l-5.8 3.5l1.6-6.5l-5-4.3l6.6-.5z" fill="none" stroke="rgba(220,225,235,.75)" stroke-width="1.1" stroke-linejoin="round"/>
<!-- gear -->
<path fill="#fff" fill-rule="evenodd" d="M1418.6 153.8h3l.5 2.3l1.7.8l2-1.3l2.1 2.1l-1.3 2l.8 1.7l2.3.5v3l-2.3.5l-.8 1.7l1.3 2l-2.1 2.1l-2-1.3l-1.7.8l-.5 2.3h-3l-.5-2.3l-1.7-.8l-2 1.3l-2.1-2.1l1.3-2l-.8-1.7l-2.3-.5v-3l2.3-.5l.8-1.7l-1.3-2l2.1-2.1l2 1.3l1.7-.8z M1420.1 158.9a3.1 3.1 0 1 0 0 6.2a3.1 3.1 0 1 0 0-6.2z"/>
<!-- back chevron -->
<polyline points="1480.5,157 1475,162 1480.5,167" fill="none" stroke="#fff" stroke-width="2"/>
</svg>
<!-- avatar Katarzyna -->
<div class="a" style="left:1182px;top:10.8px;width:39px;height:39px;border-radius:50%;overflow:hidden;background:linear-gradient(90deg,#9c6a52 0%,#b08060 30%,#b99a80 45%,#cbc8bd 55%,#d2cec4 100%);">
 <svg width="39" height="39" viewBox="0 0 39 39" style="position:absolute;left:0;top:0">
 <rect x="0" y="26" width="14" height="13" fill="#a57a62"/>
 <rect x="28" y="22" width="11" height="17" fill="#dcd3c6"/>
 <path d="M7.3 39v-17c0-4 2-5.8 5-6.3l3.3-.8h7l3.6.9c3 .6 5.3 2.4 5.4 6.2l.6 17z" fill="#e2574e"/>
 <path d="M15.8 14.2l3.3 12.4l3.6-12.4z" fill="#b87868"/>
 <path d="M16.8 14.5l2.4 6l2.6-6z" fill="#e6c0b0"/>
 <ellipse cx="18.4" cy="10.6" rx="4.6" ry="5.6" fill="#e8c4b4"/>
 <path d="M13.2 8.6c-.3-5 2-7.9 5.4-7.9s5.5 2.8 4.7 7.6c-.8-2-2.5-3.1-4.9-3.1s-4.3 1.2-5.2 3.4z" fill="#e9e9e6"/>
 <g fill="none" stroke="#4a5878" stroke-width=".55"><rect x="14.4" y="7.6" width="3.4" height="2" rx=".5"/><rect x="19" y="7.6" width="3.4" height="2" rx=".5"/></g>
 <path d="M16.6 12.6c1 .9 2.6.9 3.6 0" fill="none" stroke="#fff" stroke-width=".7"/>
 <path d="M11 31.5c3 1.6 9 1.9 15.5-.4" fill="none" stroke="#b8403c" stroke-width="1.1"/>
 <path d="M13 34.5c4 1 10 .7 14-1.3" fill="none" stroke="#b8403c" stroke-width=".9"/>
 </svg>
</div>

<!--HICONS_END-->
<!-- ===== MAIN CARD ===== -->
<div class="card" style="left:66px;top:199px;width:1308px;height:1000px;"></div>
<svg class="a" style="left:85px;top:221px" width="7" height="5" viewBox="0 0 7 5"><path d="M0.5 4.3l3-3.3l3 3.3z" fill="#b5babf"/></svg>
<div class="t" style="left:95.3px;top:217px;font-size:12.7px;color:#858585;">Ukryj wykres</div>
<div class="a" style="left:85.35px;top:230px;width:82px;height:0;border-top:1px dashed #7d7d7d;"></div>
<div class="a" style="left:84.2px;top:245px;width:1271.6px;height:541px;box-sizing:border-box;border:1px solid #c9d1d4;border-radius:3.5px;box-shadow:1px 1px 3px rgba(0,0,0,.06);"></div>

<!--CHART_START-->
<svg class="a" style="left:0;top:0;" width="1748" height="1162" viewBox="0 0 1748 1162">
<line x1="162.70" y1="586.55" x2="812.50" y2="586.55" stroke="#c9cacc" stroke-width="1"/>
<line x1="149.50" y1="593.25" x2="162.70" y2="586.55" stroke="#dcdcdc" stroke-width="1"/>
<line x1="162.70" y1="546.55" x2="812.50" y2="546.55" stroke="#c9cacc" stroke-width="1"/>
<line x1="149.50" y1="553.25" x2="162.70" y2="546.55" stroke="#dcdcdc" stroke-width="1"/>
<line x1="162.70" y1="506.55" x2="812.50" y2="506.55" stroke="#c9cacc" stroke-width="1"/>
<line x1="149.50" y1="513.25" x2="162.70" y2="506.55" stroke="#dcdcdc" stroke-width="1"/>
<line x1="162.70" y1="466.55" x2="812.50" y2="466.55" stroke="#c9cacc" stroke-width="1"/>
<line x1="149.50" y1="473.25" x2="162.70" y2="466.55" stroke="#dcdcdc" stroke-width="1"/>
<line x1="162.70" y1="426.55" x2="812.50" y2="426.55" stroke="#c9cacc" stroke-width="1"/>
<line x1="149.50" y1="433.25" x2="162.70" y2="426.55" stroke="#dcdcdc" stroke-width="1"/>
<line x1="162.70" y1="386.55" x2="812.50" y2="386.55" stroke="#c9cacc" stroke-width="1"/>
<line x1="149.50" y1="393.25" x2="162.70" y2="386.55" stroke="#dcdcdc" stroke-width="1"/>
<line x1="162.70" y1="346.55" x2="812.50" y2="346.55" stroke="#c9cacc" stroke-width="1"/>
<line x1="149.50" y1="353.25" x2="162.70" y2="346.55" stroke="#dcdcdc" stroke-width="1"/>
<line x1="162.70" y1="306.55" x2="812.50" y2="306.55" stroke="#c9cacc" stroke-width="1"/>
<line x1="149.50" y1="313.25" x2="162.70" y2="306.55" stroke="#dcdcdc" stroke-width="1"/>
<line x1="162.70" y1="266.55" x2="812.50" y2="266.55" stroke="#c9cacc" stroke-width="1"/>
<line x1="149.50" y1="273.25" x2="162.70" y2="266.55" stroke="#dcdcdc" stroke-width="1"/>
<line x1="162.70" y1="266.55" x2="162.70" y2="586.55" stroke="#c9cacc" stroke-width="1"/>
<line x1="149.50" y1="593.25" x2="162.70" y2="586.55" stroke="#dcdcdc" stroke-width="1"/>
<line x1="271.00" y1="266.55" x2="271.00" y2="586.55" stroke="#c9cacc" stroke-width="1"/>
<line x1="257.80" y1="593.25" x2="271.00" y2="586.55" stroke="#dcdcdc" stroke-width="1"/>
<line x1="379.30" y1="266.55" x2="379.30" y2="586.55" stroke="#c9cacc" stroke-width="1"/>
<line x1="366.10" y1="593.25" x2="379.30" y2="586.55" stroke="#dcdcdc" stroke-width="1"/>
<line x1="487.60" y1="266.55" x2="487.60" y2="586.55" stroke="#c9cacc" stroke-width="1"/>
<line x1="474.40" y1="593.25" x2="487.60" y2="586.55" stroke="#dcdcdc" stroke-width="1"/>
<line x1="595.90" y1="266.55" x2="595.90" y2="586.55" stroke="#c9cacc" stroke-width="1"/>
<line x1="582.70" y1="593.25" x2="595.90" y2="586.55" stroke="#dcdcdc" stroke-width="1"/>
<line x1="704.20" y1="266.55" x2="704.20" y2="586.55" stroke="#c9cacc" stroke-width="1"/>
<line x1="691.00" y1="593.25" x2="704.20" y2="586.55" stroke="#dcdcdc" stroke-width="1"/>
<line x1="812.50" y1="266.55" x2="812.50" y2="586.55" stroke="#c9cacc" stroke-width="1"/>
<line x1="799.30" y1="593.25" x2="812.50" y2="586.55" stroke="#dcdcdc" stroke-width="1"/>
<line x1="799.30" y1="593.25" x2="812.50" y2="586.55" stroke="#a0a0a0" stroke-width="1"/>
<polygon points="202.35,353.25 215.55,346.55 215.55,586.55 202.35,593.25" fill="#5b80aa"/>
<polygon points="160.55,353.25 202.35,353.25 215.55,346.55 173.75,346.55" fill="#7bb0ea"/>
<rect x="160.55" y="353.25" width="41.80" height="240.00" fill="#6b9acd"/>
<line x1="173.75" y1="346.55" x2="173.75" y2="586.55" stroke="#5b80aa" stroke-opacity=".35" stroke-width="1"/>
<polygon points="248.15,351.15 261.35,344.45 261.35,586.55 248.15,593.25" fill="#a67e57"/>
<polygon points="206.15,351.15 248.15,351.15 261.35,344.45 219.35,344.45" fill="#e6ae77"/>
<rect x="206.15" y="351.15" width="42.00" height="242.10" fill="#c69868"/>
<line x1="219.35" y1="344.45" x2="219.35" y2="586.55" stroke="#a67e57" stroke-opacity=".35" stroke-width="1"/>
<polygon points="310.65,309.25 323.85,302.55 323.85,586.55 310.65,593.25" fill="#5b80aa"/>
<polygon points="268.85,309.25 310.65,309.25 323.85,302.55 282.05,302.55" fill="#7bb0ea"/>
<rect x="268.85" y="309.25" width="41.80" height="284.00" fill="#6b9acd"/>
<line x1="282.05" y1="302.55" x2="282.05" y2="586.55" stroke="#5b80aa" stroke-opacity=".35" stroke-width="1"/>
<polygon points="356.45,398.75 369.65,392.05 369.65,586.55 356.45,593.25" fill="#a67e57"/>
<polygon points="314.45,398.75 356.45,398.75 369.65,392.05 327.65,392.05" fill="#e6ae77"/>
<rect x="314.45" y="398.75" width="42.00" height="194.50" fill="#c69868"/>
<line x1="327.65" y1="392.05" x2="327.65" y2="586.55" stroke="#a67e57" stroke-opacity=".35" stroke-width="1"/>
<polygon points="418.95,513.25 432.15,506.55 432.15,586.55 418.95,593.25" fill="#5b80aa"/>
<polygon points="377.15,513.25 418.95,513.25 432.15,506.55 390.35,506.55" fill="#7bb0ea"/>
<rect x="377.15" y="513.25" width="41.80" height="80.00" fill="#6b9acd"/>
<line x1="390.35" y1="506.55" x2="390.35" y2="586.55" stroke="#5b80aa" stroke-opacity=".35" stroke-width="1"/>
<polygon points="464.75,541.21 477.95,534.51 477.95,586.55 464.75,593.25" fill="#a67e57"/>
<polygon points="422.75,541.21 464.75,541.21 477.95,534.51 435.95,534.51" fill="#e6ae77"/>
<rect x="422.75" y="541.21" width="42.00" height="52.04" fill="#c69868"/>
<line x1="435.95" y1="534.51" x2="435.95" y2="586.55" stroke="#a67e57" stroke-opacity=".35" stroke-width="1"/>
<polygon points="527.25,545.25 540.45,538.55 540.45,586.55 527.25,593.25" fill="#5b80aa"/>
<polygon points="485.45,545.25 527.25,545.25 540.45,538.55 498.65,538.55" fill="#7bb0ea"/>
<rect x="485.45" y="545.25" width="41.80" height="48.00" fill="#6b9acd"/>
<line x1="498.65" y1="538.55" x2="498.65" y2="586.55" stroke="#5b80aa" stroke-opacity=".35" stroke-width="1"/>
<polygon points="573.05,547.19 586.25,540.49 586.25,586.55 573.05,593.25" fill="#a67e57"/>
<polygon points="531.05,547.19 573.05,547.19 586.25,540.49 544.25,540.49" fill="#e6ae77"/>
<rect x="531.05" y="547.19" width="42.00" height="46.06" fill="#c69868"/>
<line x1="544.25" y1="540.49" x2="544.25" y2="586.55" stroke="#a67e57" stroke-opacity=".35" stroke-width="1"/>
<polygon points="635.55,573.25 648.75,566.55 648.75,586.55 635.55,593.25" fill="#5b80aa"/>
<polygon points="593.75,573.25 635.55,573.25 648.75,566.55 606.95,566.55" fill="#7bb0ea"/>
<rect x="593.75" y="573.25" width="41.80" height="20.00" fill="#6b9acd"/>
<line x1="606.95" y1="566.55" x2="606.95" y2="586.55" stroke="#5b80aa" stroke-opacity=".35" stroke-width="1"/>
<polygon points="681.35,571.95 694.55,565.25 694.55,586.55 681.35,593.25" fill="#a67e57"/>
<polygon points="639.35,571.95 681.35,571.95 694.55,565.25 652.55,565.25" fill="#e6ae77"/>
<rect x="639.35" y="571.95" width="42.00" height="21.30" fill="#c69868"/>
<line x1="652.55" y1="565.25" x2="652.55" y2="586.55" stroke="#a67e57" stroke-opacity=".35" stroke-width="1"/>
<polygon points="743.85,449.25 757.05,442.55 757.05,586.55 743.85,593.25" fill="#5b80aa"/>
<polygon points="702.05,449.25 743.85,449.25 757.05,442.55 715.25,442.55" fill="#7bb0ea"/>
<rect x="702.05" y="449.25" width="41.80" height="144.00" fill="#6b9acd"/>
<line x1="715.25" y1="442.55" x2="715.25" y2="586.55" stroke="#5b80aa" stroke-opacity=".35" stroke-width="1"/>
<polygon points="747.65,593.25 789.65,593.25 802.85,586.55 760.85,586.55" fill="#a67e57" />
<line x1="149.50" y1="273.25" x2="149.50" y2="593.25" stroke="#000" stroke-width="1"/>
<line x1="149.00" y1="593.25" x2="799.30" y2="593.25" stroke="#000" stroke-width="1"/>
<line x1="143" y1="593.25" x2="149.50" y2="593.25" stroke="#000" stroke-width="1"/>
<text x="136.5" y="597.45" text-anchor="end" font-size="12" fill="#000">0</text>
<line x1="143" y1="553.25" x2="149.50" y2="553.25" stroke="#000" stroke-width="1"/>
<text x="136.5" y="557.45" text-anchor="end" font-size="12" fill="#000">20</text>
<line x1="143" y1="513.25" x2="149.50" y2="513.25" stroke="#000" stroke-width="1"/>
<text x="136.5" y="517.45" text-anchor="end" font-size="12" fill="#000">40</text>
<line x1="143" y1="473.25" x2="149.50" y2="473.25" stroke="#000" stroke-width="1"/>
<text x="136.5" y="477.45" text-anchor="end" font-size="12" fill="#000">60</text>
<line x1="143" y1="433.25" x2="149.50" y2="433.25" stroke="#000" stroke-width="1"/>
<text x="136.5" y="437.45" text-anchor="end" font-size="12" fill="#000">80</text>
<line x1="143" y1="393.25" x2="149.50" y2="393.25" stroke="#000" stroke-width="1"/>
<text x="136.5" y="397.45" text-anchor="end" font-size="12" fill="#000">100</text>
<line x1="143" y1="353.25" x2="149.50" y2="353.25" stroke="#000" stroke-width="1"/>
<text x="136.5" y="357.45" text-anchor="end" font-size="12" fill="#000">120</text>
<line x1="143" y1="313.25" x2="149.50" y2="313.25" stroke="#000" stroke-width="1"/>
<text x="136.5" y="317.45" text-anchor="end" font-size="12" fill="#000">140</text>
<line x1="143" y1="273.25" x2="149.50" y2="273.25" stroke="#000" stroke-width="1"/>
<text x="136.5" y="277.45" text-anchor="end" font-size="12" fill="#000">160</text>
<line x1="203.65" y1="593.25" x2="203.65" y2="598.25" stroke="#000" stroke-width="1"/>
<text transform="translate(208.15,606.75) rotate(-45)" text-anchor="end" font-size="12" fill="#000">Krzysztof Wojciechowski</text>
<line x1="311.95" y1="593.25" x2="311.95" y2="598.25" stroke="#000" stroke-width="1"/>
<text transform="translate(316.45,606.75) rotate(-45)" text-anchor="end" font-size="12" fill="#000">Zuzanna Szymańska</text>
<line x1="420.25" y1="593.25" x2="420.25" y2="598.25" stroke="#000" stroke-width="1"/>
<text transform="translate(424.75,606.75) rotate(-45)" text-anchor="end" font-size="12" fill="#000">Krzysztof Krawczyk</text>
<line x1="528.55" y1="593.25" x2="528.55" y2="598.25" stroke="#000" stroke-width="1"/>
<text transform="translate(533.05,606.75) rotate(-45)" text-anchor="end" font-size="12" fill="#000">Milena Kaźmierczak</text>
<line x1="636.85" y1="593.25" x2="636.85" y2="598.25" stroke="#000" stroke-width="1"/>
<text transform="translate(641.35,606.75) rotate(-45)" text-anchor="end" font-size="12" fill="#000">Lidia Ciesielska</text>
<line x1="745.15" y1="593.25" x2="745.15" y2="598.25" stroke="#000" stroke-width="1"/>
<text transform="translate(749.65,606.75) rotate(-45)" text-anchor="end" font-size="12" fill="#000">Marta Adamczyk</text>
<text x="473.75" y="724.85" text-anchor="middle" font-size="13.9" font-weight="bold" fill="#000">Osoba odpowiedzialna</text>
<rect x="149.75" y="749.25" width="15.9" height="15.9" fill="#88aed9" stroke="#6a9acb" stroke-width="1"/>
<text x="170.3" y="761.5" font-size="12.1" fill="#000">Planowane koszty pracy</text>
<rect x="442.75" y="749.25" width="15.9" height="15.9" fill="#d7aa82" stroke="#c9935f" stroke-width="1"/>
<text x="463" y="761.5" font-size="12.1" fill="#000">Łącznie spędzony</text>
</svg>
<!--CHART_END-->
<!-- TABLE -->
<div class="a" style="left:81px;top:809.5px;width:1278px;height:304px;box-sizing:border-box;border:1px solid #e1e1e1;border-radius:5.5px;overflow:hidden;">
  <div class="a" style="left:0;top:0;width:100%;height:31.5px;background:#f2eecf;"></div>
  <div class="a" style="left:723px;top:0;width:347.5px;height:31.5px;background:#e5e0b5;"></div>
</div>
<!--TABLE_START-->
<div class="vl" style="left:377.40px;top:809.50px;height:304.20px;"></div>
<div class="vl" style="left:543.30px;top:809.50px;height:304.20px;"></div>
<div class="vl" style="left:803.50px;top:809.50px;height:304.20px;"></div>
<div class="vl" style="left:1151.00px;top:809.50px;height:304.20px;"></div>
<div class="row" style="top:840.50px;"></div>
<div class="row" style="top:885.95px;"></div>
<div class="row" style="top:931.40px;"></div>
<div class="row" style="top:976.85px;"></div>
<div class="row" style="top:1022.30px;"></div>
<div class="row" style="top:1067.75px;"></div>
<div class="t" style="left:99px;top:820.00px;font-size:12.6px;color:#545454;">Osoba odpowiedzialna</div>
<div class="t" style="left:395.5px;top:820.00px;font-size:12.6px;color:#545454;">Liczba zadań</div>
<div class="t" style="left:561.5px;top:820.00px;font-size:12.6px;color:#545454;">Planowane koszty pracy</div>
<div class="t" style="left:821.75px;top:820.00px;font-size:12.6px;color:#545454;">Spędzony na okresie raportowania</div>
<div class="t" style="left:1169.4px;top:820.00px;font-size:12.6px;color:#545454;">Łącznie spędzony</div>
<div class="t" style="left:810.5px;top:820.50px;font-size:12.5px;color:#9a9a82;font-weight:bold;">&#8595;</div>
<div class="nm" style="top:856.50px;">Krzysztof Wojciechowski</div>
<div class="num" style="left:427.40px;width:100px;top:856.50px;">1</div>
<div class="num" style="left:686.00px;width:100px;top:856.50px;">120:00</div>
<div class="num" style="left:1034.00px;width:100px;top:856.50px;">121:03</div>
<div class="num" style="left:1240.00px;width:100px;top:856.50px;">121:03</div>
<div class="nm" style="top:901.95px;">Zuzanna Szymańska</div>
<div class="num" style="left:427.40px;width:100px;top:901.95px;">1</div>
<div class="num" style="left:686.00px;width:100px;top:901.95px;">142:00</div>
<div class="num" style="left:1034.00px;width:100px;top:901.95px;">97:15</div>
<div class="num" style="left:1240.00px;width:100px;top:901.95px;">97:15</div>
<div class="nm" style="top:947.40px;">Krzysztof Krawczyk</div>
<div class="num" style="left:427.40px;width:100px;top:947.40px;">1</div>
<div class="num" style="left:686.00px;width:100px;top:947.40px;">40:00</div>
<div class="num" style="left:1034.00px;width:100px;top:947.40px;">26:01</div>
<div class="num" style="left:1240.00px;width:100px;top:947.40px;">26:01</div>
<div class="nm" style="top:992.85px;">Milena Kaźmierczak</div>
<div class="num" style="left:427.40px;width:100px;top:992.85px;">1</div>
<div class="num" style="left:686.00px;width:100px;top:992.85px;">24:00</div>
<div class="num" style="left:1034.00px;width:100px;top:992.85px;">23:02</div>
<div class="num" style="left:1240.00px;width:100px;top:992.85px;">23:02</div>
<div class="nm" style="top:1038.30px;">Lidia Ciesielska</div>
<div class="num" style="left:427.40px;width:100px;top:1038.30px;">2</div>
<div class="num" style="left:686.00px;width:100px;top:1038.30px;">10:00</div>
<div class="num" style="left:1034.00px;width:100px;top:1038.30px;">9:52</div>
<div class="num" style="left:1240.00px;width:100px;top:1038.30px;">10:39</div>
<div class="nm" style="top:1083.75px;">Marta Adamczyk</div>
<div class="num" style="left:427.40px;width:100px;top:1083.75px;">1</div>
<div class="num" style="left:686.00px;width:100px;top:1083.75px;">72:00</div>
<div class="num" style="left:1034.00px;width:100px;top:1083.75px;">0:00</div>
<div class="num" style="left:1240.00px;width:100px;top:1083.75px;">0:00</div>
<!--TABLE_END-->

<!-- ===== FILTER CARD ===== -->
<div class="card" style="left:1390px;top:199px;width:280px;height:407px;"></div>
<div class="flab" style="top:212.5px;font-weight:bold;">Filtr</div>
<div class="fsep" style="top:243.5px;"></div>
<div class="fsep" style="top:277px;"></div>
<div class="fsep" style="top:310.3px;"></div>
<div class="fsep" style="top:344px;"></div>

<!-- ===== O RAPORCIE ===== -->
<div class="card" style="left:1390px;top:622.5px;width:280px;height:133px;"></div>
<!--FILTER_START-->
<div class="cb" style="top:253.3px;background:#0b66e4;"><svg width="13" height="13" viewBox="0 0 13 13" style="position:absolute;left:0;top:0"><path d="M3 6.8 L5.4 9.2 L10 3.9" fill="none" stroke="#fff" stroke-width="1.9" stroke-linecap="round" stroke-linejoin="round"/></svg></div>
<div class="flab" style="left:1432.4px;top:252.7px;font-size:13.6px;">Moje zadania</div>
<div class="cb" style="top:286.8px;background:#0b66e4;"><svg width="13" height="13" viewBox="0 0 13 13" style="position:absolute;left:0;top:0"><path d="M3 6.8 L5.4 9.2 L10 3.9" fill="none" stroke="#fff" stroke-width="1.9" stroke-linecap="round" stroke-linejoin="round"/></svg></div>
<div class="flab" style="left:1432.4px;top:286.2px;font-size:13.6px;">Zadania podwładnych</div>
<div class="cb" style="top:320px;border:1px solid #767676;background:#fff;"></div>
<div class="flab" style="left:1432.4px;top:319.4px;font-size:13.6px;">Grupa zadań</div>
<div class="flab" style="top:355.9px;font-size:13.4px;">Raport za okres</div>
<div class="inp" style="left:1405.3px;top:378px;width:224.4px;height:21px;"><span class="t" style="left:5px;top:3.3px;">Zakres dat</span>
<svg class="a" style="left:210px;top:6.5px" width="9" height="6" viewBox="0 0 9 6"><path d="M0.6 0.8 L4.5 4.8 L8.4 0.8" fill="none" stroke="#333" stroke-width="1.1"/></svg></div>
<div class="inp" style="left:1405.3px;top:405.8px;width:82.2px;height:25.2px;"><span class="t" style="left:5px;top:5.45px;font-size:13.3px;">01.06.2024</span></div>
<div class="a" style="left:1492.8px;top:409px;width:15px;height:14.5px;"><svg width="15" height="15" viewBox="0 0 15 15"><rect x="0.5" y="0.5" width="14" height="14" fill="#f4f4f4" stroke="#c8c8c8"/><rect x="0.5" y="0.5" width="14" height="3" fill="#e23b2e"/><text x="7.5" y="12" text-anchor="middle" font-size="9" font-weight="bold" fill="#2060c0">1</text><line x1="3" y1="12.8" x2="12" y2="12.8" stroke="#888" stroke-width=".6"/></svg></div>
<div class="t" style="left:1517px;top:409px;font-size:10px;color:#555;">···</div>
<div class="inp" style="left:1531px;top:405.8px;width:82.4px;height:25.2px;"><span class="t" style="left:5px;top:5.45px;font-size:13.3px;">12.07.2024</span></div>
<div class="a" style="left:1619px;top:409px;width:15px;height:14.5px;"><svg width="15" height="15" viewBox="0 0 15 15"><rect x="0.5" y="0.5" width="14" height="14" fill="#f4f4f4" stroke="#c8c8c8"/><rect x="0.5" y="0.5" width="14" height="3" fill="#e23b2e"/><text x="7.5" y="12" text-anchor="middle" font-size="9" font-weight="bold" fill="#2060c0">1</text><line x1="3" y1="12.8" x2="12" y2="12.8" stroke="#888" stroke-width=".6"/></svg></div>
<div class="flab" style="top:442.7px;font-size:13.4px;">Projekt "jest równy"</div>
<div class="inp" style="left:1405.3px;top:464.8px;width:225.2px;height:21.2px;"></div>
<div class="flab" style="top:497.7px;font-size:13.4px;">Status "jest równy"</div>
<div class="inp" style="left:1405.3px;top:520px;width:224.4px;height:21px;"><span class="t" style="left:5px;top:3.1px;">Ignoruj</span>
<svg class="a" style="left:210px;top:6.5px" width="9" height="6" viewBox="0 0 9 6"><path d="M0.6 0.8 L4.5 4.8 L8.4 0.8" fill="none" stroke="#333" stroke-width="1.1"/></svg></div>
<div class="a" style="left:1405.3px;top:560.5px;width:93.6px;height:24.5px;box-sizing:border-box;border-radius:3px;background:linear-gradient(#fff,#dde3e6);border:1px solid #d3d8db;border-bottom:1.5px solid #9aa3a8;box-shadow:0 1px 1px rgba(0,0,0,.1);"></div>
<div class="t" style="left:1424.5px;top:567.7px;font-size:13.4px;font-weight:bold;color:#434343;">Zastosuj</div>
<div class="t" style="left:1516px;top:567.7px;font-size:13.2px;color:#2067b0;">Anuluj</div>
<!-- O raporcie -->
<div class="flab" style="top:635.7px;font-weight:bold;font-size:13.3px;">O raporcie</div>
<div class="fsep" style="top:656.5px;"></div>
<div class="a" style="left:1405.5px;top:663.9px;width:262px;font-size:13.4px;line-height:18.9px;color:#333;">Pokaż jak długo zajęło każdemu pracownikowi wykonanie aktywnego zadania śledzenia zasobów. Raport może być podzielony na projekty.</div>

<!--FILTER_END-->

</div></body></html>
